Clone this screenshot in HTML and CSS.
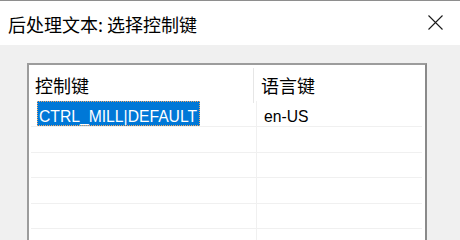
FILE: index.html
```html
<!DOCTYPE html>
<html lang="zh-CN">
<head>
<meta charset="utf-8">
<title>后处理文本: 选择控制键</title>
<link rel="stylesheet" href="styles.css">
</head>
<body>
<div class="dialog">
  <div class="titlebar">
    <span class="title">后处理文本: 选择控制键</span>
    <span class="close" aria-label="关闭">
      <svg width="15" height="15" viewBox="0 0 15 15"><path d="M0.5 0.5 L14.5 14.5 M14.5 0.5 L0.5 14.5" stroke="#1a1a1a" stroke-width="1.1" fill="none"/></svg>
    </span>
  </div>
  <div class="body">
    <div class="listbox">
      <div class="header">
        <div class="hcell c1">控制键</div>
        <div class="hcell c2">语言键</div>
      </div>
      <div class="row">
        <div class="cell c1"><span class="sel">CTRL_MILL|DEFAULT</span></div>
        <div class="cell c2"><span class="txt">en-US</span></div>
      </div>
      <div class="row"><div class="cell c1"></div><div class="cell c2"></div></div>
      <div class="row"><div class="cell c1"></div><div class="cell c2"></div></div>
      <div class="row"><div class="cell c1"></div><div class="cell c2"></div></div>
      <div class="row"><div class="cell c1"></div><div class="cell c2"></div></div>
      <div class="row"><div class="cell c1"></div><div class="cell c2"></div></div>
    </div>
  </div>
</div>
</body>
</html>
```
FILE: styles.css
```css
html, body {
  margin: 0;
  padding: 0;
  height: 100%;
  overflow: hidden;
  background: #f0f0f0;
}
.dialog {
  width: 460px;
  height: 240px;
  display: flex;
  flex-direction: column;
}
.titlebar {
  height: 44px;
  border-top: 1px solid #8e8e8e;
  background: #ffffff;
  display: flex;
  align-items: center;
  justify-content: space-between;
  padding: 0 17px 0 8px;
}
.title {
  font-family: "Noto Sans CJK SC", "Noto Sans", sans-serif;
  font-size: 18px;
  line-height: 44px;
  color: #000;
  padding-top: 1px;
}
.close {
  display: flex;
  width: 15px;
  height: 15px;
  margin-top: -1px;
}
.body {
  flex: 1;
  padding: 18px 0 0 27px;
  overflow: hidden;
}
.listbox {
  width: 396px;
  height: 200px;
  border: 2px solid #9c9c9c;
  border-right-color: #8a8a8a;
  background: #fff;
  overflow: hidden;
}
.header {
  display: grid;
  grid-template-columns: 225px 1fr;
  height: 36px;
}
.hcell {
  font-family: "Noto Sans CJK SC", "Noto Sans", sans-serif;
  font-size: 18px;
  line-height: 36px;
  color: #000;
  padding-left: 6px;
  padding-top: 1px;
}
.hcell.c1 {
  border-right: 1px solid #e6e6e6;
  margin: 3px 0 0 0;
  line-height: 33px;
  padding-top: 1px;
}
.hcell.c2 {
  padding-left: 7px;
  padding-top: 2px;
}
.row {
  display: grid;
  grid-template-columns: 226px 1fr;
  height: 24.5px;
  border-bottom: 1px solid #f0f0f0;
  margin: 0 3px 0 2px;
}
.cell {
  font-family: "Liberation Sans", Arial, sans-serif;
  font-size: 15.7px;
  color: #000;
}
.cell.c1 {
  border-right: 1px solid #f0f0f0;
  margin-left: -2px;
  padding-left: 8px;
}
.row:nth-of-type(2) {
  height: 25px;
}
.sel {
  display: inline-block;
  box-sizing: border-box;
  height: 25px;
  padding: 7px 3px 0 2px;
  line-height: 18px;
  background: #0078d7;
  color: #fff;
  outline: 1px dotted #f2a968;
  outline-offset: -1px;
}
.txt {
  display: inline-block;
  padding: 7px 0 0 7px;
  line-height: 18px;
}
```
